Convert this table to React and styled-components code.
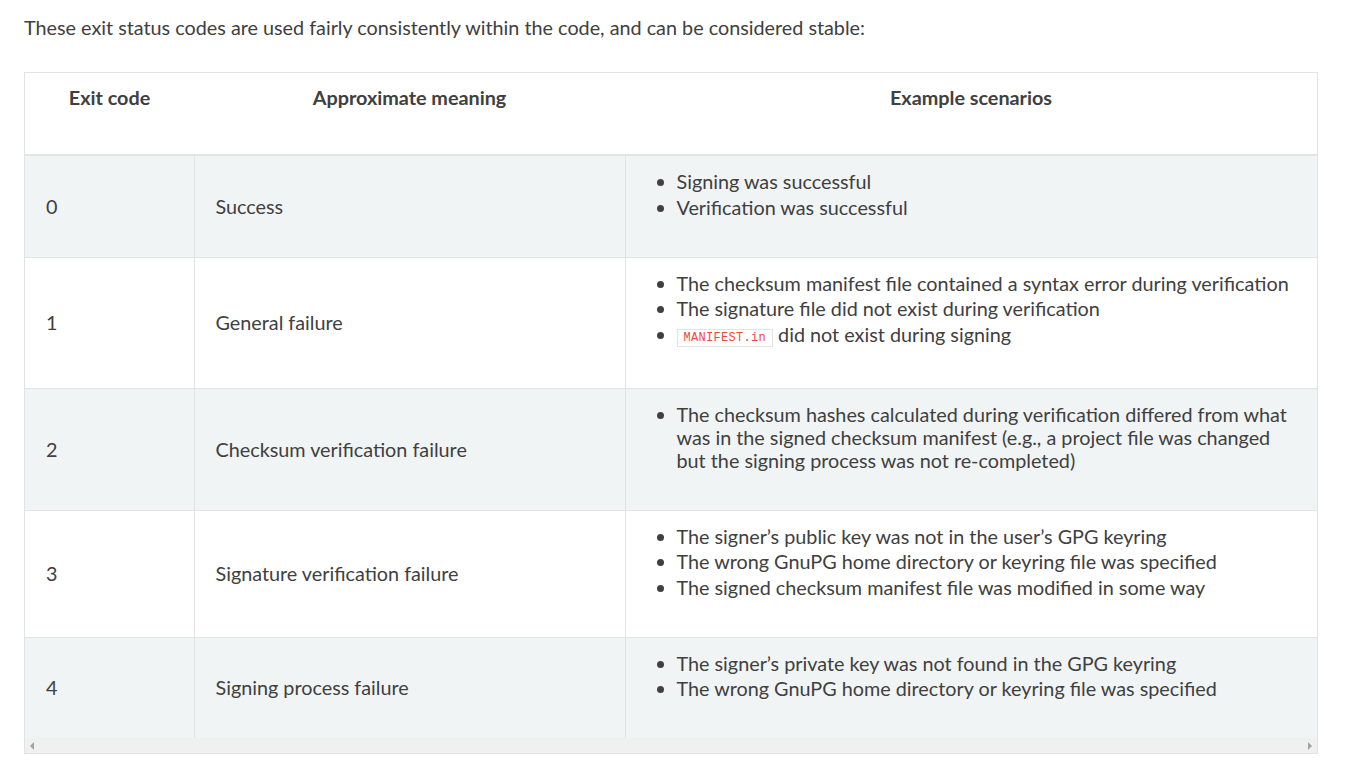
import React from "react";
import styled, { createGlobalStyle } from "styled-components";

const GlobalStyle = createGlobalStyle`
  html, body {
    margin: 0;
    padding: 0;
    background: #ffffff;
  }
  body {
    font-family: Lato, "Open Sans", sans-serif;
    color: #404040;
    font-size: 19.8px;
  }
`;

const Page = styled.div`
  padding: 15px 50px 0 24px;
`;

const Intro = styled.p`
  margin: 0 0 33px;
  line-height: 24px;
`;

const Wrapper = styled.div`
  border: 1px solid #e1e4e5;
  width: 1292px;
`;

const Table = styled.table`
  border-collapse: collapse;
  width: 100%;
  table-layout: fixed;
`;

const Head = styled.th`
  font-weight: 700;
  text-align: center;
  vertical-align: top;
  line-height: 23px;
  padding: 13px 20px 45px;
  border-bottom: 2px solid #e1e4e5;
`;

const Row = styled.tr`
  background: ${(p) => (p.$odd ? "#f1f4f5" : "#ffffff")};
  border-bottom: ${(p) => (p.$last ? "none" : "1px solid #e1e4e5")};
`;

const Cell = styled.td`
  vertical-align: middle;
  line-height: 23px;
  padding: 14px 20px 14px 21px;
  border-left: ${(p) => (p.$first ? "none" : "1px solid #e1e4e5")};
`;

const List = styled.ul`
  margin: 0 0 24px;
  padding-left: 30px;

  li + li {
    margin-top: 2.5px;
  }
`;

const Item = styled.li`
  padding-bottom: ${(p) => (p.$code ? "4px" : "0")};
`;

const Code = styled.code`
  font-family: "Liberation Mono", "DejaVu Sans Mono", monospace;
  font-size: 12px;
  line-height: 14px;
  color: #e74c3c;
  background: #ffffff;
  border: 1px solid #e1e4e5;
  padding: 1px 6px;
  letter-spacing: 0.3px;
  vertical-align: 1px;
`;

const ScrollBar = styled.div`
  height: 15px;
  background: #f0f0f0;
  display: flex;
  align-items: center;
  justify-content: space-between;
  padding: 0 5px;
`;

const Arrow = styled.span`
  width: 0;
  height: 0;
  border-top: 4px solid transparent;
  border-bottom: 4px solid transparent;
  ${(p) =>
    p.$dir === "left"
      ? "border-right: 4px solid #a3a3a3;"
      : "border-left: 4px solid #a3a3a3;"}
`;

const rows = [
  {
    code: "0",
    meaning: "Success",
    items: ["Signing was successful", "Verification was successful"],
  },
  {
    code: "1",
    meaning: "General failure",
    items: [
      "The checksum manifest file contained a syntax error during verification",
      "The signature file did not exist during verification",
      <>
        <Code>MANIFEST.in</Code> did not exist during signing
      </>,
    ],
  },
  {
    code: "2",
    meaning: "Checksum verification failure",
    items: [
      "The checksum hashes calculated during verification differed from what was in the signed checksum manifest (e.g., a project file was changed but the signing process was not re-completed)",
    ],
  },
  {
    code: "3",
    meaning: "Signature verification failure",
    items: [
      "The signer\u2019s public key was not in the user\u2019s GPG keyring",
      "The wrong GnuPG home directory or keyring file was specified",
      "The signed checksum manifest file was modified in some way",
    ],
  },
  {
    code: "4",
    meaning: "Signing process failure",
    items: [
      "The signer\u2019s private key was not found in the GPG keyring",
      "The wrong GnuPG home directory or keyring file was specified",
    ],
  },
];

export default function App() {
  return (
    <Page>
      <GlobalStyle />
      <Intro>
        These exit status codes are used fairly consistently within the code, and can be
        considered stable:
      </Intro>
      <Wrapper>
        <Table>
          <colgroup>
            <col style={{ width: 169 }} />
            <col style={{ width: 431 }} />
            <col />
          </colgroup>
          <thead>
            <tr>
              <Head>Exit code</Head>
              <Head>Approximate meaning</Head>
              <Head>Example scenarios</Head>
            </tr>
          </thead>
          <tbody>
            {rows.map((r, i) => (
              <Row key={r.code} $odd={i % 2 === 0} $last={i === rows.length - 1}>
                <Cell $first>{r.code}</Cell>
                <Cell>{r.meaning}</Cell>
                <Cell>
                  <List>
                    {r.items.map((it, j) => (
                      <Item key={j} $code={typeof it !== "string"}>
                        {it}
                      </Item>
                    ))}
                  </List>
                </Cell>
              </Row>
            ))}
          </tbody>
        </Table>
        <ScrollBar>
          <Arrow $dir="left" />
          <Arrow $dir="right" />
        </ScrollBar>
      </Wrapper>
    </Page>
  );
}
